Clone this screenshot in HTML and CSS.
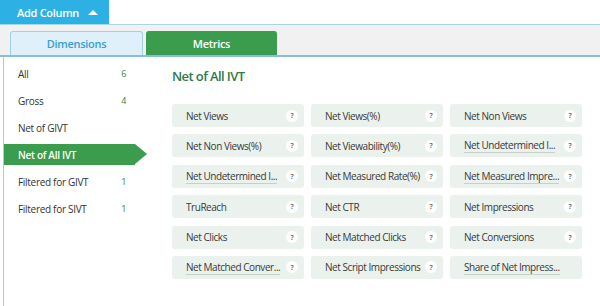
FILE: index.html
```html
<!DOCTYPE html>
<html>
<head>
<meta charset="utf-8">
<link rel="stylesheet" href="styles.css">
</head>
<body>
<div class="top">
  <button class="add-btn">Add Column <span class="tri"></span></button>
</div>
<div class="tabbar">
  <div class="tab tab-dim">Dimensions</div>
  <div class="tab tab-met">Metrics</div>
</div>
<div class="body">
  <ul class="side">
    <li class="item"><span>All</span><span class="count">6</span></li>
    <li class="item"><span>Gross</span><span class="count">4</span></li>
    <li class="item"><span>Net of GIVT</span></li>
    <li class="item active"><span>Net of All IVT</span></li>
    <li class="item"><span>Filtered for GIVT</span><span class="count">1</span></li>
    <li class="item"><span>Filtered for SIVT</span><span class="count">1</span></li>
  </ul>
  <div class="main">
    <h2 class="title">Net of All IVT</h2>
    <div class="grid">
      <div class="chip"><span class="lbl">Net Views</span><span class="q">?</span></div>
      <div class="chip"><span class="lbl">Net Views(%)</span><span class="q">?</span></div>
      <div class="chip"><span class="lbl">Net Non Views</span><span class="q">?</span></div>
      <div class="chip"><span class="lbl">Net Non Views(%)</span><span class="q">?</span></div>
      <div class="chip"><span class="lbl">Net Viewability(%)</span><span class="q">?</span></div>
      <div class="chip"><span class="lbl trunc">Net Undetermined I...</span><span class="q">?</span></div>
      <div class="chip"><span class="lbl trunc">Net Undetermined I...</span><span class="q">?</span></div>
      <div class="chip"><span class="lbl">Net Measured Rate(%)</span><span class="q">?</span></div>
      <div class="chip"><span class="lbl trunc">Net Measured Impre...</span><span class="q">?</span></div>
      <div class="chip"><span class="lbl">TruReach</span><span class="q">?</span></div>
      <div class="chip"><span class="lbl">Net CTR</span><span class="q">?</span></div>
      <div class="chip"><span class="lbl">Net Impressions</span><span class="q">?</span></div>
      <div class="chip"><span class="lbl">Net Clicks</span><span class="q">?</span></div>
      <div class="chip"><span class="lbl">Net Matched Clicks</span><span class="q">?</span></div>
      <div class="chip"><span class="lbl">Net Conversions</span><span class="q">?</span></div>
      <div class="chip"><span class="lbl trunc">Net Matched Conver...</span><span class="q">?</span></div>
      <div class="chip"><span class="lbl">Net Script Impressions</span><span class="q">?</span></div>
      <div class="chip"><span class="lbl trunc">Share of Net Impress...</span></div>
    </div>
  </div>
</div>
</body>
</html>
```

FILE: styles.css
```css
* { box-sizing: border-box; }
html, body { margin: 0; padding: 0; }
body {
  font-family: "Open Sans", "DejaVu Sans", sans-serif;
  background: #fff;
  width: 600px;
  height: 306px;
  overflow: hidden;
  color: #333;
}
.top { height: 24px; }
.add-btn {
  height: 24px;
  width: 109px;
  border: 0;
  margin: 0;
  padding: 0 0 0 17px;
  background: #2db1e5;
  color: #fff;
  font-family: inherit;
  font-weight: 600;
  font-size: 11px;
  letter-spacing: -0.3px;
  text-align: left;
  display: flex;
  align-items: center;
  gap: 9px;
}
.tri {
  width: 0; height: 0;
  border-left: 5px solid transparent;
  border-right: 5px solid transparent;
  border-bottom: 5px solid #fff;
}
.tabbar {
  height: 33px;
  background: #f1f1f1;
  border-top: 1px solid #a6d6ea;
  border-bottom: 2px solid #86c0d6;
  display: flex;
  align-items: flex-end;
  padding-left: 10px;
  gap: 3px;
}
.tab {
  width: 133px;
  height: 24px;
  border-radius: 3px 3px 0 0;
  display: flex;
  align-items: center;
  justify-content: center;
  font-size: 11px;
  font-weight: 600;
  letter-spacing: -0.3px;
}
.tab-dim {
  background: #dff0fa;
  border: 1px solid #9fd1e6;
  border-bottom: 0;
  color: #3a9ed0;
}
.tab-met {
  width: 131px;
  background: #3a9c4c;
  color: #fff;
}
.body {
  display: flex;
  height: 249px;
}
.side {
  list-style: none;
  margin: 0 0 0 3px;
  padding: 6px 0 0 0;
  width: 132px;
  border-left: 1px solid #9fd1e6;
  display: flex;
  flex-direction: column;
  gap: 6px;
}
.item {
  height: 21px;
  display: flex;
  align-items: center;
  justify-content: space-between;
  padding: 0 9px 0 14px;
  font-size: 10px;
  letter-spacing: -0.3px;
  color: #333;
  position: relative;
}
.count { color: #3a7a4a; font-size: 9px; }
.item.active {
  background: #3a9c4c;
  color: #fff;
  font-weight: 600;
}
.item.active::after {
  content: "";
  position: absolute;
  right: -12px;
  top: 0;
  border-top: 10.5px solid transparent;
  border-bottom: 10.5px solid transparent;
  border-left: 12px solid #3a9c4c;
}
.main {
  flex: 1;
  padding: 9px 0 0 37px;
}
.title {
  margin: 0;
  font-size: 13px;
  font-weight: 600;
  letter-spacing: -0.6px;
  color: #2d7a4c;
  height: 20px;
  line-height: 20px;
}
.grid {
  margin-top: 18px;
  display: grid;
  grid-template-columns: repeat(3, 132px);
  column-gap: 7px;
  row-gap: 7.4px;
}
.chip {
  height: 23px;
  background: #ebf1ed;
  border-radius: 3px;
  display: flex;
  align-items: center;
  justify-content: space-between;
  padding: 0 6px 0 14px;
}
.lbl {
  font-size: 10px;
  letter-spacing: -0.45px;
  color: #3a3a3a;
  white-space: nowrap;
  line-height: 14px;
}
.lbl.trunc { border-bottom: 1px solid #c9cfcb; }
.q {
  width: 12px;
  height: 12px;
  border-radius: 50%;
  background: #fff;
  font-size: 7px;
  color: #555;
  display: flex;
  align-items: center;
  justify-content: center;
  font-weight: 600;
}
```
